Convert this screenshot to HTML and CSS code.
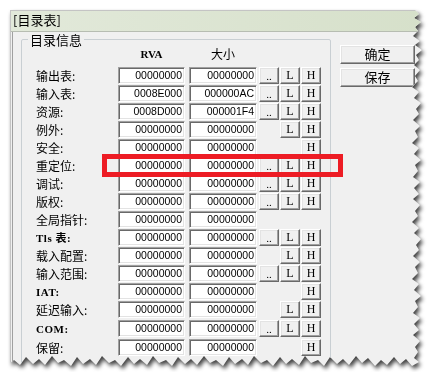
FILE: index.html
```html
<!DOCTYPE html>
<html lang="zh-CN">
<head>
  <meta charset="UTF-8">
  <title>目录表</title>
  <link rel="stylesheet" href="styles.css">
</head>
<body>
  <div class="paper">
    <div class="shadow">
      <div class="window">
        <div class="titlebar">[目录表]</div>
        <div class="client">
          <!-- 目录信息 group -->
          <div class="group">
            <div class="legend">目录信息</div>
            <div class="head">
              <span class="col-rva">RVA</span>
              <span class="col-size">大小</span>
            </div>

            <div class="row">
              <span class="label">输出表:</span>
              <span class="field">00000000</span><span class="field wide">00000000</span>
              <span class="btn dots">..</span><span class="btn">L</span><span class="btn">H</span>
            </div>
            <div class="row">
              <span class="label">输入表:</span>
              <span class="field">0008E000</span><span class="field wide">000000AC</span>
              <span class="btn dots">..</span><span class="btn">L</span><span class="btn">H</span>
            </div>
            <div class="row">
              <span class="label">资源:</span>
              <span class="field">0008D000</span><span class="field wide">000001F4</span>
              <span class="btn dots">..</span><span class="btn">L</span><span class="btn">H</span>
            </div>
            <div class="row">
              <span class="label">例外:</span>
              <span class="field">00000000</span><span class="field wide">00000000</span>
              <span class="btn none"></span><span class="btn">L</span><span class="btn">H</span>
            </div>
            <div class="row">
              <span class="label">安全:</span>
              <span class="field">00000000</span><span class="field wide">00000000</span>
              <span class="btn none"></span><span class="btn none"></span><span class="btn">H</span>
            </div>
            <div class="row">
              <span class="label">重定位:</span>
              <span class="field">00000000</span><span class="field wide">00000000</span>
              <span class="btn dots">..</span><span class="btn">L</span><span class="btn">H</span>
            </div>
            <div class="row">
              <span class="label">调试:</span>
              <span class="field">00000000</span><span class="field wide">00000000</span>
              <span class="btn dots">..</span><span class="btn">L</span><span class="btn">H</span>
            </div>
            <div class="row">
              <span class="label">版权:</span>
              <span class="field">00000000</span><span class="field wide">00000000</span>
              <span class="btn dots">..</span><span class="btn">L</span><span class="btn">H</span>
            </div>
            <div class="row">
              <span class="label">全局指针:</span>
              <span class="field">00000000</span><span class="field wide">00000000</span>
            </div>
            <div class="row">
              <span class="label mono">Tls 表:</span>
              <span class="field">00000000</span><span class="field wide">00000000</span>
              <span class="btn dots">..</span><span class="btn">L</span><span class="btn">H</span>
            </div>
            <div class="row">
              <span class="label">载入配置:</span>
              <span class="field">00000000</span><span class="field wide">00000000</span>
              <span class="btn none"></span><span class="btn">L</span><span class="btn">H</span>
            </div>
            <div class="row">
              <span class="label">输入范围:</span>
              <span class="field">00000000</span><span class="field wide">00000000</span>
              <span class="btn dots">..</span><span class="btn">L</span><span class="btn">H</span>
            </div>
            <div class="row">
              <span class="label mono">IAT:</span>
              <span class="field">00000000</span><span class="field wide">00000000</span>
              <span class="btn none"></span><span class="btn none"></span><span class="btn">H</span>
            </div>
            <div class="row">
              <span class="label">延迟输入:</span>
              <span class="field">00000000</span><span class="field wide">00000000</span>
              <span class="btn none"></span><span class="btn">L</span><span class="btn">H</span>
            </div>
            <div class="row gap-more">
              <span class="label mono">COM:</span>
              <span class="field">00000000</span><span class="field wide">00000000</span>
              <span class="btn dots">..</span><span class="btn">L</span><span class="btn">H</span>
            </div>
            <div class="row gap-more">
              <span class="label">保留:</span>
              <span class="field">00000000</span><span class="field wide">00000000</span>
              <span class="btn none"></span><span class="btn none"></span><span class="btn">H</span>
            </div>
          </div>

          <!-- Side buttons -->
          <div class="side">
            <span class="push">确定</span>
            <span class="push">保存</span>
          </div>

          <!-- Red highlight around the 重定位 row -->
          <div class="mark"></div>
        </div>
      </div>
    </div>
  </div>
</body>
</html>
```

FILE: styles.css
```css
/* General Reset */
* {
  margin: 0;
  padding: 0;
  box-sizing: border-box;
}

body {
  background-color: #ffffff;
  font-family: 'Noto Sans CJK SC', sans-serif;
  font-size: 12px;
  color: #000;
}

.paper {
  padding: 10px 0 0 10px;
}

/* the torn screenshot casts a soft shadow */
.shadow {
  width: 414px;
  filter: drop-shadow(2px 3px 2px rgba(0, 0, 0, 0.75));
}

.window {
  width: 414px;
  height: 362px;
  background-color: #f0f0f0;
  border-left: 1px solid #c4c4c4;
  border-top: 1px solid #c4c4c4;
  overflow: hidden;
  clip-path: polygon(
    0 0, 405px 0, 409px 4px, 404px 8px, 411px 12px, 405px 17px, 408px 21px, 403px 26px,
    410px 31px, 405px 35px, 412px 40px, 406px 45px, 409px 50px, 404px 55px, 410px 60px,
    405px 66px, 408px 71px, 402px 77px, 409px 82px, 404px 88px, 411px 93px, 406px 99px,
    409px 104px, 403px 110px, 410px 116px, 405px 121px, 408px 127px, 402px 133px,
    409px 138px, 404px 144px, 411px 150px, 405px 155px, 408px 161px, 403px 167px,
    410px 172px, 404px 178px, 409px 184px, 403px 189px, 410px 195px, 405px 201px,
    408px 206px, 402px 212px, 409px 218px, 404px 223px, 411px 229px, 406px 235px,
    409px 240px, 403px 246px, 410px 252px, 405px 257px, 408px 263px, 402px 269px,
    409px 274px, 404px 280px, 411px 286px, 405px 291px, 408px 297px, 403px 303px,
    410px 308px, 404px 314px, 409px 320px, 403px 325px, 410px 331px, 405px 337px,
    408px 342px, 404px 348px,
    409px 352px, 402px 356px, 396px 349px, 390px 354px, 384px 347px, 377px 355px,
    371px 350px, 365px 356px, 358px 348px, 352px 353px, 346px 346px, 339px 355px,
    333px 349px, 327px 354px, 320px 347px, 314px 356px, 308px 350px, 301px 353px,
    295px 346px, 289px 355px, 282px 349px, 276px 354px, 270px 347px, 263px 356px,
    257px 350px, 251px 353px, 244px 346px, 238px 355px, 232px 349px, 225px 354px,
    219px 347px, 213px 356px, 206px 350px, 200px 353px, 194px 346px, 187px 355px,
    181px 349px, 175px 354px, 168px 347px, 162px 356px, 156px 350px, 149px 353px,
    143px 346px, 137px 355px, 130px 349px, 124px 354px, 118px 347px, 111px 356px,
    105px 350px, 99px 353px, 92px 346px, 86px 355px, 80px 349px, 73px 354px,
    67px 347px, 61px 356px, 54px 350px, 48px 353px, 42px 346px, 35px 355px,
    29px 349px, 23px 354px, 16px 347px, 10px 355px, 4px 350px, 0 353px
  );
}

.titlebar {
  height: 21px;
  padding: 2px 0 0 2px;
  line-height: 14px;
  font-size: 13px;
  background: linear-gradient(to right, #e2e9da, #d6e0ca);
  border-bottom: 1px solid #b7bdb2;
}

.client {
  position: relative;
  display: flex;
  gap: 9px;
  margin-left: 1px;
  padding: 7px 0 0 8px;
  border-left: 1px solid #a0a0a0;
  height: 340px;
}

/* group box */
.group {
  width: 310px;
  height: 340px;
  border: 1px solid #c9cfd3;
  border-radius: 2px;
  padding: 0 0 0 14px;
}

.legend {
  width: fit-content;
  margin: -7px 0 0 -8px;
  padding: 0 2px;
  height: 13px;
  line-height: 13px;
  font-size: 13px;
  background-color: #f0f0f0;
}

.head {
  display: flex;
  height: 14px;
  margin-top: 1px;
  line-height: 14px;
}

.col-rva {
  margin-left: 82px;
  width: 67px;
  text-align: center;
  font-family: 'Liberation Serif', serif;
  font-size: 11px;
  font-weight: bold;
}

.col-size {
  margin-left: 4px;
  width: 68px;
  text-align: center;
}

.head + .row {
  margin-top: 6px;
}

.row {
  display: flex;
  align-items: center;
  height: 17px;
  margin-top: 1px;
}

.row.gap-more {
  margin-top: 2px;
}

.label {
  width: 82px;
  line-height: 14px;
}

.label.mono {
  font-family: 'Liberation Serif', 'Noto Sans CJK SC', serif;
  font-size: 11px;
  font-weight: bold;
  letter-spacing: 0.5px;
}

/* sunken edit boxes */
.field {
  width: 67px;
  height: 17px;
  padding-right: 2px;
  text-align: right;
  line-height: 15px;
  font-family: 'Liberation Sans', sans-serif;
  font-size: 10.5px;
  background-color: #ffffff;
  border: 1px solid;
  border-color: #a0a0a0 #ffffff #ffffff #a0a0a0;
  box-shadow: inset 1px 1px 0 #696969, inset -1px -1px 0 #e3e3e3;
}

.field.wide {
  width: 68px;
  margin-left: 4px;
  margin-right: 2px;
}

/* raised little buttons */
.btn {
  width: 20px;
  height: 17px;
  margin-right: 1px;
  text-align: center;
  line-height: 15px;
  font-family: 'Liberation Serif', serif;
  font-size: 12px;
  background-color: #f0f0f0;
  border: 1px solid;
  border-color: #ffffff #696969 #696969 #ffffff;
  box-shadow: inset -1px -1px 0 #a0a0a0, inset 1px 1px 0 #e3e3e3;
}

.btn.dots {
  line-height: 17px;
  font-size: 11px;
}

.btn.none {
  visibility: hidden;
}

.side {
  display: flex;
  flex-direction: column;
  gap: 4px;
  margin-top: 6px;
}

.push {
  width: 75px;
  height: 19px;
  text-align: center;
  line-height: 16px;
  font-size: 13px;
  background-color: #f0f0f0;
  border: 1px solid;
  border-color: #ffffff #696969 #696969 #ffffff;
  box-shadow: inset -1px -1px 0 #a0a0a0, inset 1px 1px 0 #e3e3e3;
}

/* annotation drawn over the screenshot */
.mark {
  position: absolute;
  left: 89px;
  top: 122px;
  width: 241px;
  height: 23px;
  border: 5px solid #ed1c24;
}
```
